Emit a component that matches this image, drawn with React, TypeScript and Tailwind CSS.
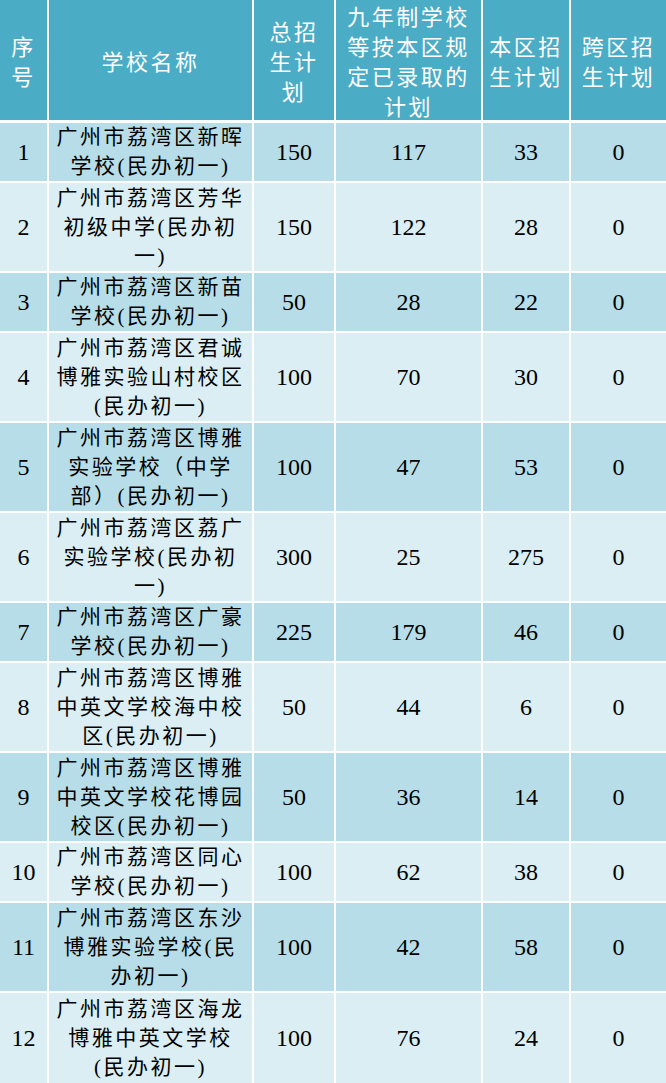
const rows = [
  { no: '1', name: ['广州市荔湾区新晖', '学校(民办初一)'], total: '150', nine: '117', local: '33', cross: '0' },
  { no: '2', name: ['广州市荔湾区芳华', '初级中学(民办初', '一)'], total: '150', nine: '122', local: '28', cross: '0' },
  { no: '3', name: ['广州市荔湾区新苗', '学校(民办初一)'], total: '50', nine: '28', local: '22', cross: '0' },
  { no: '4', name: ['广州市荔湾区君诚', '博雅实验山村校区', '(民办初一)'], total: '100', nine: '70', local: '30', cross: '0' },
  { no: '5', name: ['广州市荔湾区博雅', '实验学校（中学', '部）(民办初一)'], total: '100', nine: '47', local: '53', cross: '0' },
  { no: '6', name: ['广州市荔湾区荔广', '实验学校(民办初', '一)'], total: '300', nine: '25', local: '275', cross: '0' },
  { no: '7', name: ['广州市荔湾区广豪', '学校(民办初一)'], total: '225', nine: '179', local: '46', cross: '0' },
  { no: '8', name: ['广州市荔湾区博雅', '中英文学校海中校', '区(民办初一)'], total: '50', nine: '44', local: '6', cross: '0' },
  { no: '9', name: ['广州市荔湾区博雅', '中英文学校花博园', '校区(民办初一)'], total: '50', nine: '36', local: '14', cross: '0' },
  { no: '10', name: ['广州市荔湾区同心', '学校(民办初一)'], total: '100', nine: '62', local: '38', cross: '0' },
  { no: '11', name: ['广州市荔湾区东沙', '博雅实验学校(民', '办初一)'], total: '100', nine: '42', local: '58', cross: '0' },
  { no: '12', name: ['广州市荔湾区海龙', '博雅中英文学校', '(民办初一)'], total: '100', nine: '76', local: '24', cross: '0' },
]

const headers = [
  ['序', '号'],
  ['学校名称'],
  ['总招', '生计', '划'],
  ['九年制学校', '等按本区规', '定已录取的', '计划'],
  ['本区招', '生计划'],
  ['跨区招', '生计划'],
]

const Lines = ({ lines }: { lines: string[] }) => (
  <div>
    {lines.map((l) => (
      <div key={l}>{l}</div>
    ))}
  </div>
)

export default function App() {
  return (
    <div className="w-[666px] h-[1083px] bg-white overflow-hidden">
      {/* header row */}
      <div className="grid grid-cols-[47px_203px_80px_145px_86px_95px] gap-x-[2px] h-[120px] mb-[3px]">
        {headers.map((h, i) => (
          <div
            key={i}
            className="bg-[#4bacc6] text-white flex items-center justify-center text-center text-[22px] leading-[30px] tracking-[2.5px] font-['Noto_Sans_CJK_SC',sans-serif]"
          >
            <Lines lines={h} />
          </div>
        ))}
      </div>

      {/* body rows */}
      <div className="flex flex-col gap-y-[2px]">
        {rows.map((r, idx) => {
          const bg = idx % 2 === 0 ? 'bg-[#b7dde8]' : 'bg-[#daeef3]'
          const tall = r.name.length > 2
          const last = idx === rows.length - 1
          const h = last ? 'h-[90px]' : tall ? 'h-[88px]' : 'h-[58px]'
          const cell = `${bg} flex items-center justify-center text-center text-black`
          const num = "text-[24px] font-['Liberation_Serif',serif]"
          return (
            <div key={r.no} className={`grid grid-cols-[47px_203px_80px_145px_86px_95px] gap-x-[2px] ${h}`}>
              <div className={`${cell} ${num}`}>{r.no}</div>
              <div className={`${cell} text-[21px] leading-[29px] tracking-[2.5px] text-[#111] font-['Liberation_Serif','Noto_Sans_CJK_SC',serif]`}>
                <Lines lines={r.name} />
              </div>
              <div className={`${cell} ${num}`}>{r.total}</div>
              <div className={`${cell} ${num}`}>{r.nine}</div>
              <div className={`${cell} ${num}`}>{r.local}</div>
              <div className={`${cell} ${num}`}>{r.cross}</div>
            </div>
          )
        })}
      </div>
    </div>
  )
}
